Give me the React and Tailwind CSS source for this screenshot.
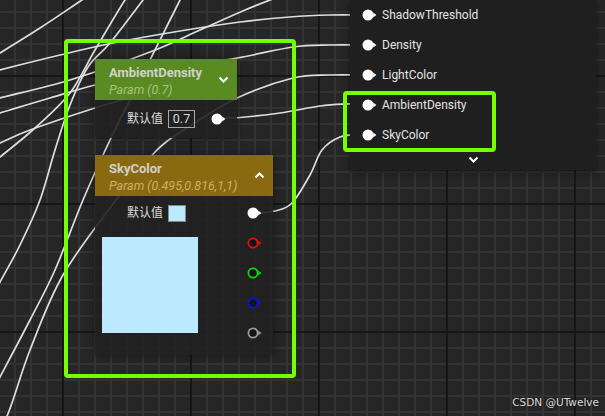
import React from "react";

function cr(pts) {
  let d = `M${pts[0][0]} ${pts[0][1]}`;
  for (let i = 0; i < pts.length - 1; i++) {
    const p0 = pts[i - 1] || pts[i];
    const p1 = pts[i];
    const p2 = pts[i + 1];
    const p3 = pts[i + 2] || pts[i + 1];
    const c1x = p1[0] + (p2[0] - p0[0]) / 6;
    const c1y = p1[1] + (p2[1] - p0[1]) / 6;
    const c2x = p2[0] - (p3[0] - p1[0]) / 6;
    const c2y = p2[1] - (p3[1] - p1[1]) / 6;
    d += ` C${c1x} ${c1y} ${c2x} ${c2y} ${p2[0]} ${p2[1]}`;
  }
  return d;
}

const WIRES = [
  // ShadowThreshold
  [[-20, 76], [0, 70], [60, 55], [113, 43], [180, 31], [240, 22], [290, 17], [330, 15], [362, 15]],
  // Density
  [[-20, 120], [0, 113], [50, 98], [95, 85], [160, 70], [237, 58], [293, 47], [330, 45], [362, 45]],
  // LightColor
  [[-10, 440], [7, 416], [30, 350], [63, 275], [116, 200], [157, 150], [187, 128], [237, 98], [293, 78], [330, 75], [362, 75]],
  // AmbientDensity
  [[220, 118], [240, 117.5], [280, 113], [320, 106], [345, 104], [362, 104]],
  // SkyColor
  [[256, 213], [275, 211], [292, 203], [310, 175], [322, 150], [340, 137], [362, 134]],
  // steep & misc
  [[-10, 60], [0, 53], [40, 28], [82, 0], [95, -8]],
  [[150, -10], [143, 0], [110, 43], [88, 67], [70, 105], [55, 150], [40, 200], [20, 245], [0, 282], [-10, 300]],
  [[135, -10], [125, 0], [95, 50], [70, 93], [35, 128], [0, 157], [-10, 165]],
  [[-10, 102], [0, 98], [70, 80], [150, 52], [200, 30], [245, 10], [275, -2]],
  [[-8, 392], [0, 377], [30, 320], [55, 270], [83, 200], [110, 140], [130, 100], [150, 60], [170, 20], [180, 0], [184, -8]],
  [[-10, 147], [0, 143], [30, 130], [95, 108], [140, 95]],
];

function Pin({ color = "#ffffff", ring = false }) {
  return (
    <svg width="16" height="12" viewBox="0 0 16 12" className="block shrink-0">
      {ring ? (
        <circle cx="6" cy="6" r="4.6" fill="#141414" stroke={color} strokeWidth="1.8" />
      ) : (
        <circle cx="6" cy="6" r="5.5" fill={color} />
      )}
      <path d="M11.2 3.6 L14.4 6 L11.2 8.4 Z" fill={color} />
    </svg>
  );
}

function Chevron({ up = false }) {
  return (
    <svg width="11" height="7" viewBox="0 0 11 7" className="block">
      <polyline
        points={up ? "1.5,5.5 5.5,1.5 9.5,5.5" : "1.5,1.5 5.5,5.5 9.5,1.5"}
        fill="none"
        stroke="#ffffff"
        strokeWidth="2"
      />
    </svg>
  );
}

function PanelRow({ label }) {
  return (
    <div className="flex h-[30px] items-center pl-[12px]">
      <Pin />
      <span className="ml-[4px] text-[12px] leading-none text-[#e4e4e4]">{label}</span>
    </div>
  );
}

export default function App() {
  return (
    <div className="relative h-[416px] w-[605px] overflow-hidden bg-[#262626] font-[Roboto,'Noto_Sans_CJK_SC',sans-serif] [background-image:linear-gradient(#161616_2px,transparent_2px),linear-gradient(90deg,#161616_2px,transparent_2px),linear-gradient(#333333_2px,transparent_2px),linear-gradient(90deg,#333333_2px,transparent_2px)] [background-size:128px_128px,128px_128px,16px_16px,16px_16px] [background-position:62px_75px,62px_75px,14px_11px,14px_11px]">
      {/* wires */}
      <svg className="absolute left-0 top-0" width="605" height="416" viewBox="0 0 605 416">
        {WIRES.map((w, i) => (
          <path key={i} d={cr(w)} fill="none" stroke="#dedede" strokeWidth="1.7" />
        ))}
      </svg>

      {/* selection box left */}
      <div className="absolute left-[64px] top-[39px] h-[339px] w-[232px] rounded-[4px] border-[4px] border-[#76ff03]" />

      {/* Node: AmbientDensity */}
      <div className="absolute left-[95px] top-[59px] w-[142px] shadow-[0_0_8px_rgba(0,0,0,0.45)]">
        <div className="flex h-[41px] items-start justify-between bg-[#5a8a22] pl-[14px] pr-[8px] pt-[5px]">
          <div className="flex flex-col">
            <span className="text-[13px] font-bold leading-[17px] text-[#d0d0d0]">AmbientDensity</span>
            <span className="text-[12.5px] italic leading-[17px] text-[#a6c47e]">Param (0.7)</span>
          </div>
          <div className="mt-[12px]">
            <Chevron />
          </div>
        </div>
        <div className="flex h-[38px] items-center bg-[rgba(33,33,33,0.9)] pl-[32px]">
          <span className="text-[12px] leading-none text-[#dcdcdc]">默认值</span>
          <div className="ml-[5px] flex h-[18px] w-[27px] items-center justify-center border border-[#a8a8a8] text-[12.5px] text-[#d8d8d8]">
            0.7
          </div>
          <div className="ml-[16px]">
            <Pin />
          </div>
        </div>
      </div>

      {/* Node: SkyColor */}
      <div className="absolute left-[95px] top-[155px] w-[178px] shadow-[0_0_8px_rgba(0,0,0,0.45)]">
        <div className="flex h-[41px] items-start justify-between bg-[#8a6a10] pl-[14px] pr-[8px] pt-[5px]">
          <div className="flex flex-col">
            <span className="text-[13px] font-bold leading-[17px] text-[#d0d0d0]">SkyColor</span>
            <span className="text-[12.5px] italic leading-[17px] text-[#c8b16a]">Param (0.495,0.816,1,1)</span>
          </div>
          <div className="mt-[12px]">
            <Chevron up />
          </div>
        </div>
        <div className="flex justify-between bg-[rgba(33,33,33,0.9)] pb-[16px] pr-[10px] pt-[8px]">
          <div className="flex flex-col">
            <div className="flex h-[18px] items-center pl-[32px]">
              <span className="text-[12px] leading-none text-[#dcdcdc]">默认值</span>
              <div className="ml-[5px] h-[17px] w-[18px] border border-[#7d8a90] bg-[#bde9ff]" />
            </div>
            <div className="ml-[7px] mt-[15px] h-[96px] w-[96px] bg-[#bde9ff]" />
          </div>
          <div className="flex flex-col gap-[18px] pt-[3px]">
            <Pin />
            <Pin ring color="#e01010" />
            <Pin ring color="#10d010" />
            <Pin ring color="#1010e0" />
            <Pin ring color="#9a9a9a" />
          </div>
        </div>
      </div>

      {/* Output panel */}
      <div className="absolute left-[350px] top-0 flex h-[170px] w-[246px] flex-col bg-[#1f1f1f] shadow-[0_2px_6px_rgba(0,0,0,0.5)]">
        <PanelRow label="ShadowThreshold" />
        <PanelRow label="Density" />
        <PanelRow label="LightColor" />
        <PanelRow label="AmbientDensity" />
        <PanelRow label="SkyColor" />
        <div className="flex flex-1 items-center justify-center pb-[2px]">
          <Chevron />
        </div>
      </div>

      {/* selection box right */}
      <div className="absolute left-[343px] top-[91px] h-[61px] w-[153px] rounded-[4px] border-[4px] border-[#76ff03]" />

      {/* watermark */}
      <div className="absolute bottom-[5px] right-[6px] font-['DejaVu_Sans',sans-serif] text-[10.5px] text-[#dcdcdc] [text-shadow:0_0_2px_rgba(0,0,0,0.8)]">
        CSDN @UTwelve
      </div>
    </div>
  );
}
